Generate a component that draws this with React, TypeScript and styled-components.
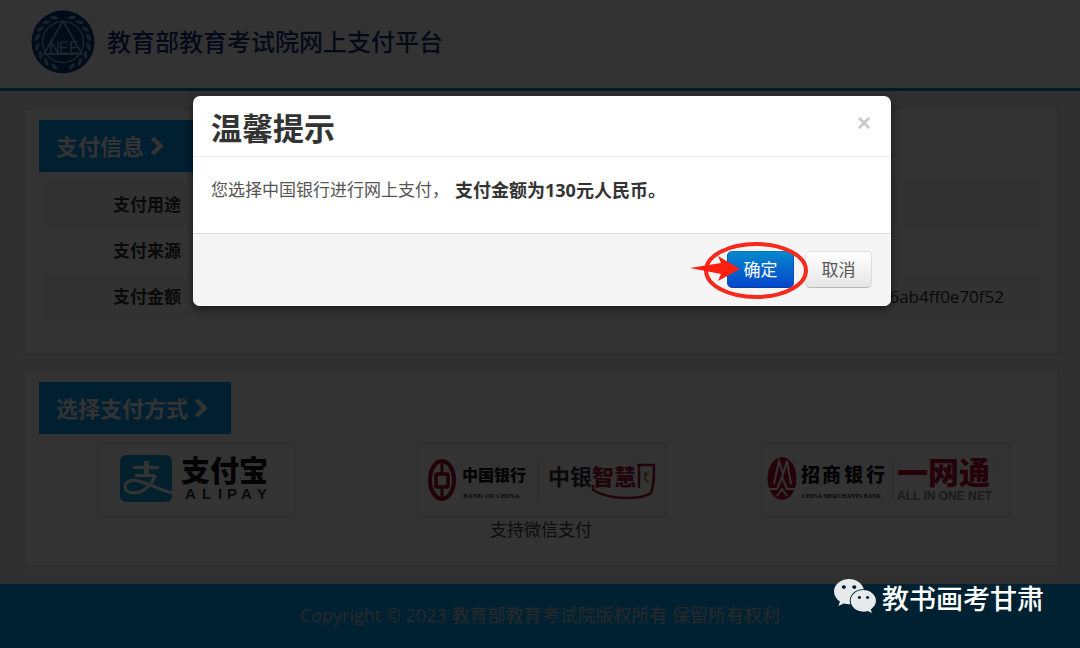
import React from "react";
import styled, { createGlobalStyle } from "styled-components";
import { FaWeixin } from "react-icons/fa";

const GlobalStyle = createGlobalStyle`
  *, *::before, *::after { box-sizing: border-box; }
  body {
    margin: 0;
    background: #ededed;
    color: #333;
    font-family: "Open Sans", "Noto Sans CJK SC", sans-serif;
    font-size: 17px;
    line-height: 26px;
  }
`;

const Page = styled.div`
  position: relative;
  display: flex;
  flex-direction: column;
  min-height: 100vh;
`;

const Header = styled.header`
  display: flex;
  align-items: center;
  gap: 12px;
  padding: 10px 31px 14px;
  background: #fff;
  border-bottom: 3px solid #0a86bb;
`;

const SiteTitle = styled.h1`
  margin: 0;
  color: #223478;
  font-size: 24px;
  font-weight: 500;
  line-height: 36px;
`;

const Main = styled.main`
  display: flex;
  flex-direction: column;
  gap: 19px;
  padding: 19px 23px 19px 25px;
`;

const Panel = styled.section<{ $bottom: number }>`
  padding: 10px 0 ${(p) => p.$bottom}px;
  background: #fff;
  box-shadow: 0 0 4px 1px #ddd;
`;

const PanelTag = styled.h2`
  display: flex;
  align-items: center;
  gap: 6px;
  width: 192px;
  height: 52px;
  margin: 0 14px;
  padding-left: 17px;
  background: #009cf0;
  color: #fff;
  font-size: 22px;
  font-weight: 700;
  line-height: 32px;
`;

const InfoTable = styled.table`
  width: calc(100% - 37px);
  margin: 10px 17px 0 20px;
  border-collapse: collapse;
`;

const InfoRow = styled.tr<{ $striped?: boolean }>`
  height: 46px;
  background: ${(p) => (p.$striped ? "#f8f8f8" : "transparent")};
`;

const InfoLabel = styled.th`
  width: 136px;
  padding: 0;
  text-align: right;
  font-weight: 700;
`;

const InfoValue = styled.td`
  padding: 0 36px 0 0;
  text-align: right;
`;

const Methods = styled.div`
  display: grid;
  grid-template-columns: repeat(3, 1fr);
  justify-items: center;
  margin-top: 9px;
`;

const Method = styled.div`
  display: flex;
  flex-direction: column;
  align-items: center;
  min-height: 101px;
`;

const MethodCard = styled.button`
  display: block;
  padding: 0;
  border: 1px solid #e2e2e2;
  border-radius: 3px;
  background: #fff;
  svg { display: block; }
`;

const MethodNote = styled.span`
  color: #444;
  font-size: 17px;
`;

const Footer = styled.footer`
  flex: 1;
  min-height: 64px;
  background: #00a5f5;
  color: #c4cdd8;
  font-size: 18px;
  text-align: center;
  line-height: 62px;
`;

const Backdrop = styled.div`
  position: absolute;
  inset: 0;
  display: flex;
  align-items: flex-start;
  justify-content: center;
  padding: 96px 16px 0 20px;
  background: rgba(0, 0, 0, 0.8);
`;

const Dialog = styled.div`
  width: 100%;
  max-width: 698px;
  border-radius: 7px;
  background: #fff;
  box-shadow: 0 3px 9px rgba(0, 0, 0, 0.5);
`;

const DialogHeader = styled.div`
  display: flex;
  align-items: center;
  justify-content: space-between;
  padding: 10px 20px 6px 18px;
  border-bottom: 1px solid #eee;
`;

const DialogTitle = styled.h3`
  margin: 0;
  font-size: 31px;
  font-weight: 700;
  line-height: 44px;
`;

const CloseButton = styled.button`
  padding: 0 0 10px;
  border: 0;
  background: none;
  color: #c8c8c8;
  font-family: "Liberation Sans", sans-serif;
  font-size: 24px;
  font-weight: 700;
  line-height: 26px;
`;

const DialogBody = styled.p`
  display: flex;
  gap: 6px;
  margin: 0;
  padding: 20px 18px 30px;
  color: #555;
`;

const Amount = styled.strong`
  color: #333;
  font-size: 18px;
`;

const DialogFooter = styled.div`
  display: flex;
  justify-content: flex-end;
  gap: 11px;
  padding: 17px 19px 18px;
  border-top: 1px solid #ddd;
  border-radius: 0 0 7px 7px;
  background: #f5f5f5;
`;

const ConfirmSlot = styled.div`
  position: relative;
`;

const DialogButton = styled.button<{ $primary?: boolean }>`
  display: block;
  width: 67px;
  height: 37px;
  padding: 0;
  border: 1px solid;
  border-color: ${(p) => (p.$primary ? "#0474c4 #0452c4 #0440a8" : "#e2e2e2 #dcdcdc #b8b8b8")};
  border-radius: 5px;
  background: ${(p) =>
    p.$primary ? "linear-gradient(#0588cc, #0446cc)" : "linear-gradient(#fff, #e6e6e6)"};
  color: ${(p) => (p.$primary ? "#fff" : "#555")};
  font-family: inherit;
  font-size: 17px;
  line-height: 26px;
`;

const Marker = styled.svg`
  position: absolute;
  top: -13px;
  left: -41px;
  pointer-events: none;
`;

const Watermark = styled.div`
  position: absolute;
  right: 36px;
  bottom: 30px;
  display: flex;
  align-items: flex-end;
  gap: 5px;
  color: #fff;
  font-size: 27px;
  font-weight: 500;
  line-height: 38px;
  svg { color: #e6eaec; }
`;

const Chevron = () => (
  <svg width="14" height="20" viewBox="0 0 14 20" aria-hidden="true">
    <path d="M2.5 2 10.500 10l-8 8" fill="none" stroke="#fff" strokeWidth="4.500" />
  </svg>
);

const leafAngles = [20, 40, 60, 80, 100, 120, 140, 160];

const Emblem = () => (
  <svg width="64" height="64" viewBox="0 0 64 64" role="img" aria-label="NEEA">
    <circle cx="32" cy="32" r="31.500" fill="#003c7c" />
    <g fill="none" stroke="#8fb4d4">
      <circle cx="32" cy="32" r="20.500" strokeWidth="1.400" />
      <path d="M32 11 13 44h38z" strokeWidth="1.800" />
      <path d="M20 43V32l7 11V32M37 32h-7v11h7M30 37.500h6M47 32h-7v11h8M40 37.500h6" strokeWidth="1.600" />
    </g>
    <g fill="#84a8c8">
      {leafAngles.map((a) => (
        <g key={a}>
          <ellipse cx="32" cy="58" rx="4" ry="1.700" transform={`rotate(${a} 32 32) rotate(28 32 58)`} />
          <ellipse cx="32" cy="58" rx="4" ry="1.700" transform={`rotate(${-a} 32 32) rotate(-28 32 58)`} />
        </g>
      ))}
    </g>
  </svg>
);

const cjk = '"Noto Sans CJK SC", sans-serif';
const serif = '"Liberation Serif", serif';
const sans = '"Liberation Sans", sans-serif';

const AlipayLogo = () => (
  <svg width="196" height="72" viewBox="0 0 196 72" role="img" aria-label="支付宝 ALIPAY">
    <rect x="21" y="11" width="52" height="47" rx="6" fill="#12a4dc" />
    <path d="M34 22h26v3H34zM45 17h5v14h-5zM36 30h20v3H36z" fill="#fff" />
    <path
      d="M56 31c-3 10-12 18-21 18-6 0-9-3-9-6 0-5 6-8 13-6 10 2 20 8 34 12"
      fill="none"
      stroke="#fff"
      strokeWidth="3"
    />
    <text x="82" y="38" fontFamily={cjk} fontSize="29" fontWeight="900" fill="#111">支付宝</text>
    <text x="86 103 119 128 142 158" y="55" fontFamily={sans} fontSize="15" fontWeight="700" fill="#333">ALIPAY</text>
  </svg>
);

const BocLogo = () => (
  <svg width="247" height="72" viewBox="0 0 247 72" role="img" aria-label="中国银行 中银智慧付">
    <g fill="none" stroke="#a0082c">
      <ellipse cx="24" cy="36" rx="12" ry="19" strokeWidth="4" />
      <path d="M24 18v11M24 43v11" strokeWidth="3" />
      <rect x="18" y="30" width="12" height="13" rx="1" strokeWidth="3.500" />
    </g>
    <text x="44" y="37" fontFamily={cjk} fontSize="16" fontWeight="900" fill="#111">中国银行</text>
    <text x="45" y="54" fontFamily={serif} fontSize="7" fontWeight="700" fill="#333">BANK OF CHINA</text>
    <path d="M120.500 18v38" stroke="#ddd" />
    <text x="130" y="41" fontFamily={cjk} fontSize="22" fontWeight="700" fill="#333">中银</text>
    <text x="174" y="41" fontFamily={cjk} fontSize="22" fontWeight="900" fill="#a0203c">智慧</text>
    <g fill="none" stroke="#a0203c" strokeWidth="2.500">
      <path d="M221 21v23M219 21h17c0 12 0 20-3 28-4 3-14 5-24 5-14 0-24-2-34-8v-5" />
    </g>
    <path d="M226 30h5M228 28l-1 7 3 3" fill="none" stroke="#b08a20" strokeWidth="2" />
  </svg>
);

const CmbLogo = () => (
  <svg width="247" height="72" viewBox="0 0 247 72" role="img" aria-label="招商银行 一网通">
    <ellipse cx="20" cy="34.500" rx="14.500" ry="21.500" fill="#b80c2c" />
    <path
      d="M12 40 17 17l4 13 4-13 4 23M7 45h8l5-12 5 12h8M15 52l5-7 5 7"
      fill="none"
      stroke="#fff"
      strokeWidth="2"
    />
    <text x="39 60 82 104" y="38" fontFamily={cjk} fontSize="19" fontWeight="900" fill="#111">招商银行</text>
    <text x="40" y="54" fontFamily={serif} fontSize="6" fontWeight="700" fill="#111">CHINA MERCHANTS BANK</text>
    <path d="M130.500 18v38" stroke="#ccc" />
    <text x="135" y="40" fontFamily={cjk} fontSize="31" fontWeight="900" fill="#b80c34">一网通</text>
    <text x="135" y="56" fontFamily={sans} fontSize="12" fontWeight="700" fill="#888">ALL IN ONE NET</text>
    <circle cx="236" cy="20" r="2" fill="none" stroke="#ddd" />
  </svg>
);

const ConfirmMarker = () => (
  <Marker width="126" height="64" viewBox="0 0 126 64" aria-hidden="true">
    <ellipse cx="70" cy="32.500" rx="50" ry="26.500" fill="none" stroke="#f32a1c" strokeWidth="4" />
    <path d="M4 30 35 25 32 18l22 13-22 12 3-7z" fill="#ff1f10" />
  </Marker>
);

export default function App() {
  return (
    <Page>
      <GlobalStyle />
      <Header>
        <Emblem />
        <SiteTitle>教育部教育考试院网上支付平台</SiteTitle>
      </Header>
      <Main>
        <Panel $bottom={33}>
          <PanelTag>支付信息<Chevron /></PanelTag>
          <InfoTable>
            <tbody>
              <InfoRow $striped>
                <InfoLabel scope="row">支付用途</InfoLabel>
                <InfoValue />
              </InfoRow>
              <InfoRow>
                <InfoLabel scope="row">支付来源</InfoLabel>
                <InfoValue />
              </InfoRow>
              <InfoRow $striped>
                <InfoLabel scope="row">支付金额</InfoLabel>
                <InfoValue>6ab4ff0e70f52</InfoValue>
              </InfoRow>
            </tbody>
          </InfoTable>
        </Panel>
        <Panel $bottom={21}>
          <PanelTag>选择支付方式<Chevron /></PanelTag>
          <Methods>
            <Method>
              <MethodCard type="button"><AlipayLogo /></MethodCard>
            </Method>
            <Method>
              <MethodCard type="button"><BocLogo /></MethodCard>
              <MethodNote>支持微信支付</MethodNote>
            </Method>
            <Method>
              <MethodCard type="button"><CmbLogo /></MethodCard>
            </Method>
          </Methods>
        </Panel>
      </Main>
      <Footer>Copyright © 2023 教育部教育考试院版权所有 保留所有权利</Footer>

      <Backdrop>
        <Dialog role="dialog" aria-modal="true" aria-labelledby="dialog-title">
          <DialogHeader>
            <DialogTitle id="dialog-title">温馨提示</DialogTitle>
            <CloseButton type="button" aria-label="关闭">×</CloseButton>
          </DialogHeader>
          <DialogBody>
            <span>您选择中国银行进行网上支付，</span>
            <Amount>支付金额为130元人民币。</Amount>
          </DialogBody>
          <DialogFooter>
            <ConfirmSlot>
              <DialogButton type="button" $primary>确定</DialogButton>
              <ConfirmMarker />
            </ConfirmSlot>
            <DialogButton type="button">取消</DialogButton>
          </DialogFooter>
        </Dialog>
      </Backdrop>

      <Watermark>
        <FaWeixin size={44} aria-hidden="true" />
        <span>教书画考甘肃</span>
      </Watermark>
    </Page>
  );
}
